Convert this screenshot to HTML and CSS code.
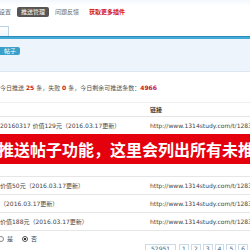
FILE: index.html
```html
<!DOCTYPE html>
<html lang="zh">
<head>
<meta charset="utf-8">
<link rel="stylesheet" href="styles.css">
</head>
<body>
<div class="page">
  <div class="topnav">
    <span class="nav-item cut">设置</span>
    <span class="nav-item active">推送管理</span>
    <span class="nav-item">问题反馈</span>
    <span class="nav-item more">获取更多插件</span>
  </div>
  <div class="tabbar"><span class="tab"></span></div>
  <div class="band"><span class="badge">帖子</span></div>
  <p class="stats">今日推送 <b class="num">25</b> 条，失败 <b class="num">0</b> 条，今日剩余可推送条数：<b class="num big">4966</b></p>
  <div class="table">
    <div class="row head"><span class="c1"></span><span class="c2">链接</span></div>
    <div class="row"><span class="c1">20160317 价值129元（2016.03.17更新）</span><span class="c2">http://www.1314study.com/t/128372.html</span></div>
    <div class="banner">推送帖子功能，这里会列出所有未推送的帖子</div>
    <div class="row covered"></div>
    <div class="row"><span class="c1">价值50元（2016.03.17更新）</span><span class="c2">http://www.1314study.com/t/128373.html</span></div>
    <div class="row"><span class="c1">（2016.03.17更新）</span><span class="c2">http://www.1314study.com/t/128374.html</span></div>
    <div class="row"><span class="c1">价值188元（2016.03.17更新）</span><span class="c2">http://www.1314study.com/t/128375.html</span></div>
  </div>
  <div class="footer">
    <div class="radios">
      <label class="radio"><span class="dot"></span>是</label>
      <label class="radio"><span class="dot on"></span>否</label>
    </div>
    <div class="pager">
      <span class="pg total">52951</span>
      <span class="pg">1</span>
      <span class="pg">2</span>
      <span class="pg">3</span>
      <span class="pg">4</span>
      <span class="pg">5</span>
      <span class="pg">6</span>
      <span class="pg">7</span>
      <span class="pg">8</span>
    </div>
  </div>
</div>
</body>
</html>
```

FILE: styles.css
```css
html, body {
  margin: 0;
  padding: 0;
  background: #fff;
}
body {
  width: 250px;
  height: 250px;
  overflow: hidden;
  font-family: "DejaVu Sans", "Noto Sans CJK SC", sans-serif;
  font-size: 6px;
  color: #444;
}
.page {
  width: 250px;
}
.topnav {
  display: flex;
  align-items: center;
  gap: 5px;
  height: 24px;
  padding-bottom: 1px;
  box-sizing: border-box;
  background: linear-gradient(#f4f8fc, #fff 6px);
  margin-left: -2px;
}
.nav-item {
  color: #666;
  line-height: 9px;
  padding: 0 1px;
}
.nav-item.active {
  background: #555;
  color: #fff;
  padding: 0 4px;
  border-radius: 2px;
  line-height: 10px;
}
.nav-item.more {
  color: #d2141c;
  font-weight: bold;
  margin-left: 3px;
}
.tabbar {
  height: 12px;
  display: flex;
  align-items: flex-end;
  border-bottom: 1px solid #2a8cbc;
}
.tab {
  display: block;
  width: 8px;
  height: 9px;
  background: linear-gradient(#fff, #eef5fb);
  border: 1px solid #b7d3e4;
  border-left: 0;
  border-bottom: 0;
}
.band {
  border-top: 2px solid #43aad6;
  background: #eef4fc;
  height: 35px;
  border-bottom: 1px solid #dde7f1;
  padding-top: 8px;
  box-sizing: border-box;
}
.badge {
  display: inline-block;
  background: #3a9fc9;
  color: #fff;
  padding: 0 4px 0 4px;
  line-height: 8px;
  border-radius: 0 2px 2px 0;
}
.stats {
  margin: 0;
  padding: 12px 0 0 0;
  height: 30px;
  box-sizing: border-box;
  line-height: 8px;
  color: #555;
}
.num {
  color: #c8161d;
  font-weight: bold;
}
.table {
  border-top: 1px solid #eee;
}
.row {
  display: flex;
  height: 18px;
  align-items: center;
  border-bottom: 1px solid #e6e6e6;
  box-sizing: border-box;
  white-space: nowrap;
}
.row.head {
  height: 14px;
  font-weight: bold;
  color: #333;
}
.row.covered {
  height: 13px;
}
.c1 {
  width: 150px;
  flex: none;
  overflow: hidden;
}
.c2 {
  flex: none;
}
.banner {
  height: 30px;
  background: #e5000d;
  color: #fff;
  font-family: "Noto Sans CJK SC", sans-serif;
  font-weight: bold;
  font-size: 16px;
  line-height: 30px;
  white-space: nowrap;
  margin-left: -2px;
  margin-top: -1px;
}
.footer {
  display: flex;
  align-items: flex-start;
  height: 22px;
}
.radios {
  display: flex;
  gap: 9px;
  width: 147px;
  flex: none;
  padding-top: 4px;
  margin-left: -2px;
}
.radio {
  display: flex;
  align-items: center;
  gap: 3px;
  line-height: 8px;
}
.dot {
  width: 4px;
  height: 4px;
  border: 1px solid #888;
  border-radius: 50%;
  background: #fff;
}
.dot.on {
  background: radial-gradient(#333 40%, #fff 50%);
  border-color: #555;
}
.pager {
  display: flex;
  gap: 2px;
  padding-top: 13px;
  flex: none;
}
.pg {
  display: block;
  border: 1px solid #c9dbe8;
  padding: 0 2px;
  line-height: 8px;
  color: #3c5a78;
  background: #fff;
}
.pg.total {
  padding: 0 5px;
  margin-right: 1px;
}
```
